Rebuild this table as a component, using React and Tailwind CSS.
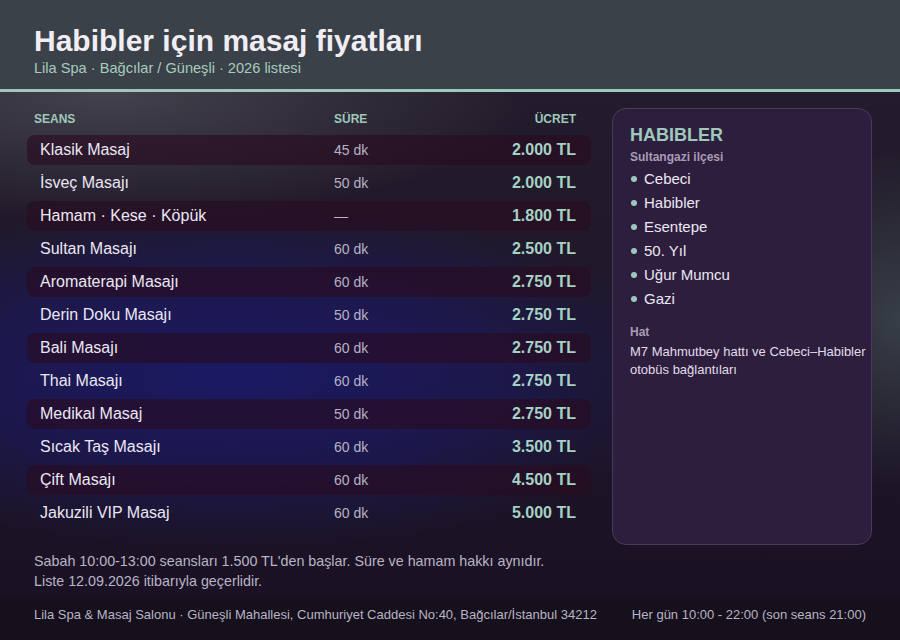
import React from 'react';

const seanslar = [
  { ad: 'Klasik Masaj', sure: '45 dk', ucret: '2.000 TL' },
  { ad: 'İsveç Masajı', sure: '50 dk', ucret: '2.000 TL' },
  { ad: 'Hamam · Kese · Köpük', sure: '—', ucret: '1.800 TL' },
  { ad: 'Sultan Masajı', sure: '60 dk', ucret: '2.500 TL' },
  { ad: 'Aromaterapi Masajı', sure: '60 dk', ucret: '2.750 TL' },
  { ad: 'Derin Doku Masajı', sure: '50 dk', ucret: '2.750 TL' },
  { ad: 'Bali Masajı', sure: '60 dk', ucret: '2.750 TL' },
  { ad: 'Thai Masajı', sure: '60 dk', ucret: '2.750 TL' },
  { ad: 'Medikal Masaj', sure: '50 dk', ucret: '2.750 TL' },
  { ad: 'Sıcak Taş Masajı', sure: '60 dk', ucret: '3.500 TL' },
  { ad: 'Çift Masajı', sure: '60 dk', ucret: '4.500 TL' },
  { ad: 'Jakuzili VIP Masaj', sure: '60 dk', ucret: '5.000 TL' },
];

const mahalleler = ['Cebeci', 'Habibler', 'Esentepe', '50. Yıl', 'Uğur Mumcu', 'Gazi'];

const SeansSatiri = ({ seans, cizgili }) => (
  <div
    className={`grid grid-cols-[294px_1fr_auto] items-center h-[30px] pl-[13px] pr-[15px] rounded-lg ${
      cizgili ? 'bg-[rgba(40,12,32,0.62)]' : ''
    }`}
  >
    <span className="text-[16px] text-[#ebe7f3]">{seans.ad}</span>
    <span className="text-[14px] text-[#b7b2c6]">{seans.sure}</span>
    <span className="text-[16px] font-bold text-[#a6d2c4]">{seans.ucret}</span>
  </div>
);

export default function App() {
  return (
    <div className="w-[900px] h-[640px] flex flex-col overflow-hidden font-['Liberation_Sans',Arial,sans-serif] bg-[#1a1224]">
      {/* Başlık */}
      <header className="h-[92px] shrink-0 bg-[#3a4148] border-b-[3px] border-[#9ec8bb] px-[34px] pt-[24px]">
        <h1 className="text-[30px] leading-[34px] font-bold text-[#f1edf5]">Habibler için masaj fiyatları</h1>
        <p className="mt-[1px] text-[14.6px] leading-[18px] text-[#a9cbbf]">Lila Spa · Bağcılar / Güneşli · 2026 listesi</p>
      </header>

      <main className="flex-1 flex flex-col bg-[radial-gradient(ellipse_62%_42%_at_26%_56%,#1b1964_0%,rgba(27,25,100,0.6)_45%,transparent_82%),radial-gradient(ellipse_22%_45%_at_100%_45%,rgba(72,88,92,0.6),transparent_75%),radial-gradient(ellipse_55%_30%_at_12%_0%,rgba(78,78,88,0.75),transparent_85%),linear-gradient(180deg,#231c2c_0%,#1a1224_100%)]">
        <div className="flex gap-[21px] pl-[27px] pr-[28px] pt-4 h-[454px]">
          {/* Fiyat tablosu */}
          <section className="w-[564px] flex flex-col">
            <div className="grid grid-cols-[300px_1fr_auto] items-center h-[22px] pl-[7px] pr-[15px] mb-[5px] text-[12px] font-bold text-[#9ec8bb]">
              <span>SEANS</span>
              <span>SÜRE</span>
              <span>ÜCRET</span>
            </div>
            <div className="flex flex-col gap-[3px]">
              {seanslar.map((s, i) => (
                <SeansSatiri key={s.ad} seans={s} cizgili={i % 2 === 0} />
              ))}
            </div>
          </section>

          {/* Bölge kartı */}
          <aside className="w-[260px] h-[437px] rounded-[14px] bg-[#2e1e3d] border border-[#4b3a60] pl-[17px] pr-[5px] pt-[16px]">
            <h2 className="text-[18px] leading-[20px] font-bold text-[#9ec8bb]">HABIBLER</h2>
            <p className="mt-[4px] text-[12px] leading-[16px] font-bold text-[#a99cb6]">Sultangazi ilçesi</p>
            <ul className="mt-[2px] flex flex-col">
              {mahalleler.map((m) => (
                <li key={m} className="flex items-center h-[24px] text-[15px] text-[#ebe7f3]">
                  <span className="w-[6px] h-[6px] rounded-full bg-[#9ec8bb] ml-[1px] mr-[7px]" />
                  {m}
                </li>
              ))}
            </ul>
            <p className="mt-[13px] text-[12px] leading-[16px] font-bold text-[#a99cb6]">Hat</p>
            <p className="mt-[3px] text-[13px] leading-[18px] text-[#e0dcea]">
              M7 Mahmutbey hattı ve Cebeci–Habibler otobüs bağlantıları
            </p>
          </aside>
        </div>

        <div className="px-[34px] pt-[5px] text-[14.3px] leading-[20px] text-[#b9b4c6]">
          <p>Sabah 10:00-13:00 seansları 1.500 TL'den başlar. Süre ve hamam hakkı aynıdır.</p>
          <p>Liste 12.09.2026 itibarıyla geçerlidir.</p>
        </div>
      </main>

      <footer className="h-[43px] shrink-0 flex items-center justify-between px-[34px] pb-[7px] bg-[#15101b] text-[13px] text-[#b9b4c6]">
        <span>Lila Spa &amp; Masaj Salonu · Güneşli Mahallesi, Cumhuriyet Caddesi No:40, Bağcılar/İstanbul 34212</span>
        <span>Her gün 10:00 - 22:00 (son seans 21:00)</span>
      </footer>
    </div>
  );
}
